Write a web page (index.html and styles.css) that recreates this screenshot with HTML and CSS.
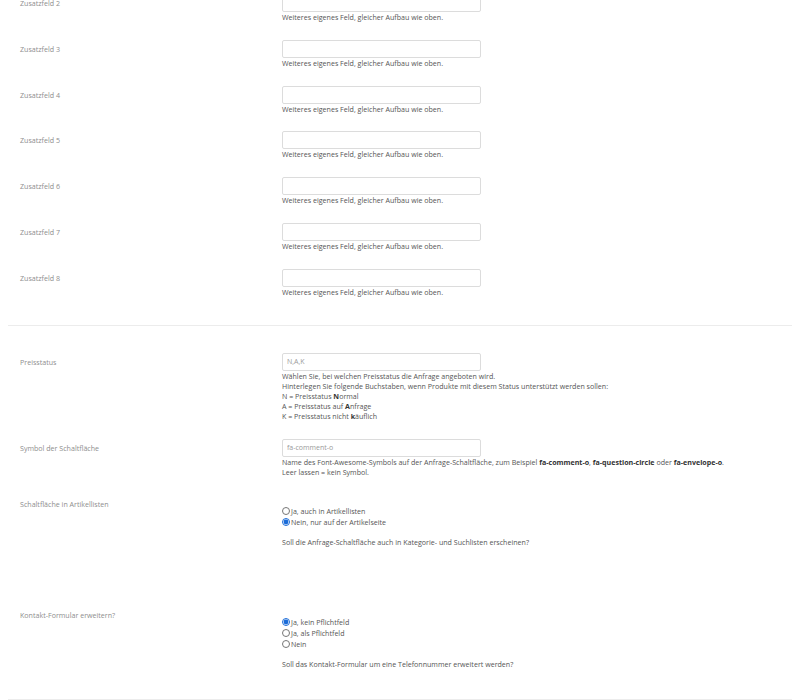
FILE: index.html
```html
<!DOCTYPE html>
<html>
  <head>
    <title>Anfrage-Modul Einstellungen</title>
    <meta name="viewport" content="width=device-width, initial-scale=1.0" />
    <link rel="stylesheet" href="styles.css">
  </head>

  <body>
    <div class="settings">
      <!-- Zusatzfelder -->
      <div class="row">
        <label class="row-label" for="extra2">Zusatzfeld 2</label>
        <div class="row-control">
          <input type="text" id="extra2" class="text-field" />
          <div class="help">Weiteres eigenes Feld, gleicher Aufbau wie oben.</div>
        </div>
      </div>
      <div class="row">
        <label class="row-label" for="extra3">Zusatzfeld 3</label>
        <div class="row-control">
          <input type="text" id="extra3" class="text-field" />
          <div class="help">Weiteres eigenes Feld, gleicher Aufbau wie oben.</div>
        </div>
      </div>
      <div class="row">
        <label class="row-label" for="extra4">Zusatzfeld 4</label>
        <div class="row-control">
          <input type="text" id="extra4" class="text-field" />
          <div class="help">Weiteres eigenes Feld, gleicher Aufbau wie oben.</div>
        </div>
      </div>
      <div class="row">
        <label class="row-label" for="extra5">Zusatzfeld 5</label>
        <div class="row-control">
          <input type="text" id="extra5" class="text-field" />
          <div class="help">Weiteres eigenes Feld, gleicher Aufbau wie oben.</div>
        </div>
      </div>
      <div class="row">
        <label class="row-label" for="extra6">Zusatzfeld 6</label>
        <div class="row-control">
          <input type="text" id="extra6" class="text-field" />
          <div class="help">Weiteres eigenes Feld, gleicher Aufbau wie oben.</div>
        </div>
      </div>
      <div class="row">
        <label class="row-label" for="extra7">Zusatzfeld 7</label>
        <div class="row-control">
          <input type="text" id="extra7" class="text-field" />
          <div class="help">Weiteres eigenes Feld, gleicher Aufbau wie oben.</div>
        </div>
      </div>
      <div class="row">
        <label class="row-label" for="extra8">Zusatzfeld 8</label>
        <div class="row-control">
          <input type="text" id="extra8" class="text-field" />
          <div class="help">Weiteres eigenes Feld, gleicher Aufbau wie oben.</div>
        </div>
      </div>

      <hr class="divider" />

      <!-- Preisstatus & Schaltfläche -->
      <div class="row">
        <label class="row-label" for="priceStatus">Preisstatus</label>
        <div class="row-control">
          <input type="text" id="priceStatus" class="text-field" placeholder="N,A,K" />
          <div class="help">
            Wählen Sie, bei welchen Preisstatus die Anfrage angeboten wird.<br />
            Hinterlegen Sie folgende Buchstaben, wenn Produkte mit diesem Status unterstützt werden sollen:<br />
            N = Preisstatus <b>N</b>ormal<br />
            A = Preisstatus auf <b>A</b>nfrage<br />
            K = Preisstatus nicht <b>k</b>äuflich
          </div>
        </div>
      </div>
      <div class="row">
        <label class="row-label" for="buttonIcon">Symbol der Schaltfläche</label>
        <div class="row-control">
          <input type="text" id="buttonIcon" class="text-field" placeholder="fa-comment-o" />
          <div class="help">
            Name des Font-Awesome-Symbols auf der Anfrage-Schaltfläche, zum Beispiel <b>fa-comment-o</b>, <b>fa-question-circle</b> oder <b>fa-envelope-o</b>.<br />
            Leer lassen = kein Symbol.
          </div>
        </div>
      </div>
      <div class="row row-radio row-spaced">
        <div class="row-label">Schaltfläche in Artikellisten</div>
        <div class="row-control">
          <label class="radio"><input type="radio" name="inLists" value="1" />Ja, auch in Artikellisten</label>
          <label class="radio"><input type="radio" name="inLists" value="0" checked />Nein, nur auf der Artikelseite</label>
          <div class="help radio-help">Soll die Anfrage-Schaltfläche auch in Kategorie- und Suchlisten erscheinen?</div>
        </div>
      </div>
      <div class="row row-radio">
        <div class="row-label">Kontakt-Formular erweitern?</div>
        <div class="row-control">
          <label class="radio"><input type="radio" name="phone" value="optional" checked />Ja, kein Pflichtfeld</label>
          <label class="radio"><input type="radio" name="phone" value="required" />Ja, als Pflichtfeld</label>
          <label class="radio"><input type="radio" name="phone" value="none" />Nein</label>
          <div class="help radio-help">Soll das Kontakt-Formular um eine Telefonnummer erweitert werden?</div>
        </div>
      </div>

      <hr class="divider" />
    </div>
  </body>
</html>
```

FILE: styles.css
```css
/* Einstellungsseite des Anfrage-Moduls */
body {
  font-family: "Open Sans", Arial, sans-serif;
  margin: 0;
  padding: 0;
  background-color: #fff;
  color: #555;
}

.settings {
  margin: -6.1px 13px 0 8px;
}

.row {
  display: flex;
  align-items: flex-start;
  margin-bottom: 17.8px;
}

.row-label {
  width: 262px;
  padding: 4px 0 0 12px;
  flex-shrink: 0;
  font-size: 7.1px;
  line-height: 10px;
  color: #8e8e8e;
}

.row-control {
  flex: 1;
}

.text-field {
  display: block;
  box-sizing: border-box;
  width: 199px;
  height: 18px;
  margin: 0;
  padding: 0 4px;
  border: 1px solid #dcdcdc;
  border-radius: 2px;
  font-family: inherit;
  font-size: 7px;
  color: #555;
}

.text-field::placeholder {
  color: #9a9a9a;
}

.help {
  font-size: 7.1px;
  line-height: 10px;
  color: #555;
}

.help b {
  color: #333;
}

/* Radiogruppen */
.row-radio .row-control {
  padding-top: 11px;
}

.row-spaced {
  margin-bottom: 57px;
}

.radio {
  display: flex;
  align-items: center;
  height: 11px;
  font-size: 7.1px;
  color: #555;
}

.radio input {
  width: 8px;
  height: 8px;
  margin: 0 1px 0 0;
  accent-color: #1a6bd8;
}

.radio-help {
  margin: 9px 0 2px;
}

/* Trennlinie zwischen den Gruppen (oberer Rand fällt mit dem der Zeile zusammen) */
.divider {
  border: none;
  border-top: 1px solid #ececec;
  margin: 28.3px 0 27px;
}
```
